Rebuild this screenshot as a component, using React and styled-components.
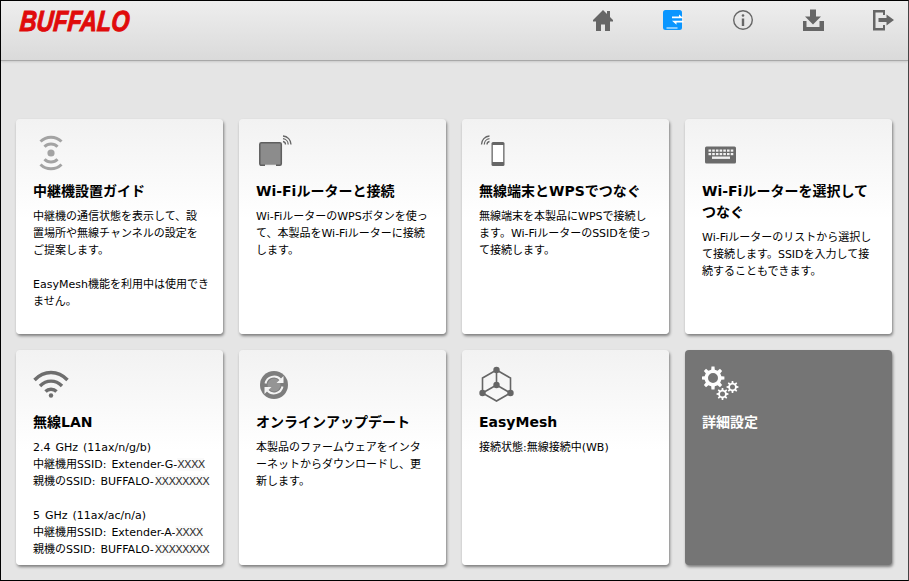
import React from "react";
import styled, { createGlobalStyle } from "styled-components";

const Global = createGlobalStyle`
  html, body { margin: 0; padding: 0; background: #e5e5e5; }
  body { font-family: "DejaVu Sans", "Noto Sans CJK JP", sans-serif; }
`;

const Frame = styled.div`
  width: 909px;
  height: 581px;
  box-sizing: border-box;
  border: 1px solid #000;
  border-right-color: #444;
  background: #e5e5e5;
  overflow: hidden;
`;

const Header = styled.header`
  height: 60px;
  box-sizing: border-box;
  display: flex;
  justify-content: space-between;
  align-items: flex-start;
  background: linear-gradient(#eeeeee, #dadada);
  border-bottom: 1px solid #a8a8a8;
  box-shadow: 0 1px 2px rgba(0, 0, 0, 0.12);
`;

const Logo = styled.div`
  margin: 4px 0 0 19px;
  font-family: "Liberation Sans", sans-serif;
  font-weight: 700;
  font-style: italic;
  font-size: 29px;
  line-height: 33px;
  color: #e00b0b;
  -webkit-text-stroke: 1px #e00b0b;
  transform: scaleX(0.8) skewX(-6deg);
  transform-origin: left center;
`;

const Nav = styled.nav`
  display: flex;
  gap: 46px;
  padding: 7px 13px 0 0;
`;

const NavIcon = styled.svg`
  width: 24px;
  height: 24px;
  display: block;
  fill: #666;
`;

const Grid = styled.main`
  display: grid;
  grid-template-columns: repeat(4, 207px);
  grid-auto-rows: 215px;
  column-gap: 16px;
  row-gap: 16px;
  padding: 58px 0 0 15px;
`;

const Card = styled.section`
  box-sizing: border-box;
  padding: 12px 14px 0 17px;
  border-radius: 4px;
  box-shadow: 1px 2px 3px rgba(0, 0, 0, 0.45);
  background: ${(p) =>
    p.$dark ? "#757575" : "linear-gradient(#f2f2f2, #ffffff 100px)"};
  color: ${(p) => (p.$dark ? "#fff" : "#000")};
`;

const IconBox = styled.svg`
  width: 48px;
  height: 48px;
  display: block;
  margin-bottom: 2px;
`;

const Title = styled.h2`
  margin: 0 0 6px;
  font-size: 14px;
  font-weight: 700;
  line-height: 21px;
  white-space: nowrap;
`;

const Body = styled.p`
  margin: 0;
  font-size: 11px;
  line-height: 17px;
  color: #000;
  white-space: nowrap;
  word-spacing: 1.5px;
`;

const Mask = styled.span`
  background: #fafafa;
  color: #333;
  letter-spacing: -0.75px;
  margin-left: ${(p) => (p.$gap ? "1px" : "0")};
`;

function gearPath(cx, cy, R, r, teeth) {
  let d = "";
  const step = (Math.PI * 2) / teeth;
  for (let i = 0; i < teeth; i++) {
    const a = i * step;
    const pts = [
      [r, a - step * 0.5],
      [r, a - step * 0.27],
      [R, a - step * 0.17],
      [R, a + step * 0.17],
      [r, a + step * 0.27],
    ];
    pts.forEach(([rad, an], j) => {
      const x = (cx + rad * Math.cos(an)).toFixed(2);
      const y = (cy + rad * Math.sin(an)).toFixed(2);
      d += `${i === 0 && j === 0 ? "M" : "L"}${x} ${y} `;
    });
  }
  return d + "Z";
}

const SignalIcon = () => (
  <IconBox viewBox="0 0 48 48" fill="none" stroke="#a3a3a3" strokeWidth="3">
    <circle cx="18" cy="22" r="3.6" fill="#a3a3a3" stroke="none" />
    <path d="M7.5 10.5 A15 15 0 0 1 28.5 10.5" />
    <path d="M11.5 15.8 A9 9 0 0 1 24.5 15.8" />
    <path d="M11.5 28.2 A9 9 0 0 0 24.5 28.2" />
    <path d="M7.5 33.5 A15 15 0 0 0 28.5 33.5" />
  </IconBox>
);

const RouterIcon = () => (
  <IconBox viewBox="0 0 48 48" fill="none">
    <rect x="3.8" y="11.8" width="21.5" height="22.5" rx="1.5" fill="#8c8c8c" stroke="#5f5f5f" strokeWidth="1.5" />
    <path d="M9 35.2h11v-1.6h-11z" fill="#eee" />
    <g stroke="#666" strokeWidth="1.3">
      <path d="M27 10.5a3 3 0 0 1 2.5 3" />
      <path d="M27 7.7a5.8 5.8 0 0 1 5.2 5.8" />
      <path d="M27 5a8.500 8.500 0 0 1 8 8.500" />
    </g>
  </IconBox>
);

const PhoneIcon = () => (
  <IconBox viewBox="0 0 48 48" fill="none">
    <rect x="12.500" y="11" width="13" height="24" rx="1.5" fill="#666" />
    <rect x="13.800" y="14" width="10.400" height="17" fill="#fff" />
    <g stroke="#666" strokeWidth="1.3">
      <path d="M10.500 10.500a3 3 0 0 0-2.500 3" />
      <path d="M10.500 7.700a5.800 5.800 0 0 0-5.200 5.800" />
      <path d="M10.500 5a8.500 8.500 0 0 0-8 8.500" />
    </g>
  </IconBox>
);

const KeyboardIcon = () => {
  const keys = [];
  for (let i = 0; i < 7; i++) {
    keys.push(<rect key={`a${i}`} x={6.5 + i * 3.7} y="18.5" width="2.6" height="2.2" />);
    keys.push(<rect key={`b${i}`} x={6.5 + i * 3.7} y="22" width="2.6" height="2.2" />);
  }
  return (
    <IconBox viewBox="0 0 48 48">
      <rect x="3" y="15.5" width="31" height="17" rx="1.5" fill="#6b6b6b" />
      <g fill="#f2f2f2">
        {keys}
        <rect x="10" y="25.5" width="18" height="2.4" />
      </g>
    </IconBox>
  );
};

const WifiIcon = () => (
  <IconBox viewBox="0 0 48 48" fill="none" stroke="#6e6e6e" strokeWidth="3.4">
    <path d="M1.5 18 C11 8 25 8 34.5 18" />
    <path d="M7 24 C13.500 17.500 22.500 17.500 29 24" />
    <path d="M12.500 29.500 C15.500 26.500 20.500 26.500 23.500 29.500" />
    <circle cx="18" cy="33.500" r="2.200" fill="#6e6e6e" stroke="none" />
  </IconBox>
);

const SyncIcon = () => (
  <IconBox viewBox="0 0 48 48" fill="none">
    <circle cx="18" cy="23" r="14" fill="#7d7d7d" />
    <circle cx="18" cy="23" r="6.500" fill="#959595" />
    <g stroke="#f4f4f4" strokeWidth="2">
      <path d="M9.500 21.500 A8.700 8.700 0 0 1 24.500 17.500" />
      <path d="M26.500 24.500 A8.700 8.700 0 0 1 11.500 28.500" />
    </g>
    <path d="M27.500 14 V21 H20.500z" fill="#f4f4f4" />
    <path d="M8.500 32 V25 H15.500z" fill="#f4f4f4" />
  </IconBox>
);

const MeshIcon = () => (
  <IconBox viewBox="0 0 48 48" fill="none" stroke="#666" strokeWidth="1.600">
    <path d="M17.500 8 L31.500 16 V31 L17.500 39 L3.500 31 V16 Z" />
    <path d="M17.500 8 V23 M17.500 23 L31.500 31 M17.500 23 L3.500 31" />
    <g fill="#666" stroke="none">
      <circle cx="17.500" cy="8" r="3.200" />
      <circle cx="17.500" cy="23" r="3.200" />
      <circle cx="3.500" cy="31" r="3.200" />
      <circle cx="31.500" cy="31" r="3.200" />
    </g>
  </IconBox>
);

const GearsIcon = () => (
  <IconBox viewBox="0 0 48 48" fill="#fff">
    <path fillRule="evenodd" d={`${gearPath(11, 16, 11.500, 8.500, 8)} M16 16 A5 5 0 1 0 6 16 A5 5 0 1 0 16 16 Z`} />
    <path fillRule="evenodd" d={`${gearPath(20.500, 32, 6, 4.300, 8)} M23 32 A2.500 2.500 0 1 0 18 32 A2.500 2.500 0 1 0 23 32 Z`} />
    <path fillRule="evenodd" d={`${gearPath(30.500, 25, 6, 4.300, 8)} M33 25 A2.500 2.500 0 1 0 28 25 A2.500 2.500 0 1 0 33 25 Z`} />
  </IconBox>
);

const cards = [
  {
    icon: <SignalIcon />,
    title: "中継機設置ガイド",
    body: (
      <>
        中継機の通信状態を表示して、設<br />
        置場所や無線チャンネルの設定を<br />
        ご提案します。<br />
        <br />
        EasyMesh機能を利用中は使用でき<br />
        ません。
      </>
    ),
  },
  {
    icon: <RouterIcon />,
    title: "Wi-Fiルーターと接続",
    body: (
      <>
        Wi-FiルーターのWPSボタンを使っ<br />
        て、本製品をWi-Fiルーターに接続<br />
        します。
      </>
    ),
  },
  {
    icon: <PhoneIcon />,
    title: "無線端末とWPSでつなぐ",
    body: (
      <>
        無線端末を本製品にWPSで接続し<br />
        ます。Wi-FiルーターのSSIDを使っ<br />
        て接続します。
      </>
    ),
  },
  {
    icon: <KeyboardIcon />,
    title: (
      <>
        Wi-Fiルーターを選択して<br />
        つなぐ
      </>
    ),
    body: (
      <>
        Wi-Fiルーターのリストから選択し<br />
        て接続します。SSIDを入力して接<br />
        続することもできます。
      </>
    ),
  },
  {
    icon: <WifiIcon />,
    title: "無線LAN",
    body: (
      <>
        2.4 GHz (11ax/n/g/b)<br />
        中継機用SSID: Extender-G-<Mask>XXXX</Mask><br />
        親機のSSID: BUFFALO-<Mask $gap>XXXXXXXX</Mask><br />
        <br />
        5 GHz (11ax/ac/n/a)<br />
        中継機用SSID: Extender-A-<Mask>XXXX</Mask><br />
        親機のSSID: BUFFALO-<Mask $gap>XXXXXXXX</Mask>
      </>
    ),
  },
  {
    icon: <SyncIcon />,
    title: "オンラインアップデート",
    body: (
      <>
        本製品のファームウェアをインタ<br />
        ーネットからダウンロードし、更<br />
        新します。
      </>
    ),
  },
  { icon: <MeshIcon />, title: "EasyMesh", body: "接続状態:無線接続中(WB)" },
  { icon: <GearsIcon />, title: "詳細設定", dark: true },
];

export default function App() {
  return (
    <Frame>
      <Global />
      <Header>
        <Logo>BUFFALO</Logo>
        <Nav>
          <NavIcon viewBox="0 0 24 24">
            <path d="M12 2 L2 12 V13.500 H5 V23 H10 V16.500 H14 V23 H19 V13.500 H22 V12 L19 9 V3 H16 V6 Z" />
          </NavIcon>
          <NavIcon viewBox="0 0 24 24">
            <rect x="2" y="2" width="19" height="20" rx="2.500" fill="#0a96ff" />
            <path d="M11 8.600 H18 V6.500 L22.500 10.200 H11z M22.500 12.800 V14.400 H15.500 V16.800 L11 12.800z" fill="#fff" />
            <rect x="5.500" y="19.500" width="11" height="1" fill="#fff" />
          </NavIcon>
          <NavIcon viewBox="0 0 24 24">
            <circle cx="12" cy="12" r="9.300" fill="none" stroke="#666" strokeWidth="1.400" />
            <circle cx="12" cy="7.500" r="1.300" />
            <path d="M10.800 10.500 H13.200 V18 H10.800z" />
          </NavIcon>
          <NavIcon viewBox="0 0 24 24">
            <path d="M9 1.500 H15 V8.500 H20 L12 16.500 L4 8.500 H9z" />
            <path d="M2 13 H5.500 V19 H18.500 V13 H23 V23 H2z" />
          </NavIcon>
          <NavIcon viewBox="0 0 24 24">
            <path d="M2 2 H14 V7 H12 V4.500 H4.500 V20 H12 V17 H14 V22.500 H2z" />
            <path d="M7.500 10 H15.500 V6.500 L23 12 L15.500 17.500 V14 H7.500z" />
          </NavIcon>
        </Nav>
      </Header>
      <Grid>
        {cards.map((c, i) => (
          <Card key={i} $dark={c.dark}>
            {c.icon}
            <Title>{c.title}</Title>
            {c.body && <Body>{c.body}</Body>}
          </Card>
        ))}
      </Grid>
    </Frame>
  );
}
